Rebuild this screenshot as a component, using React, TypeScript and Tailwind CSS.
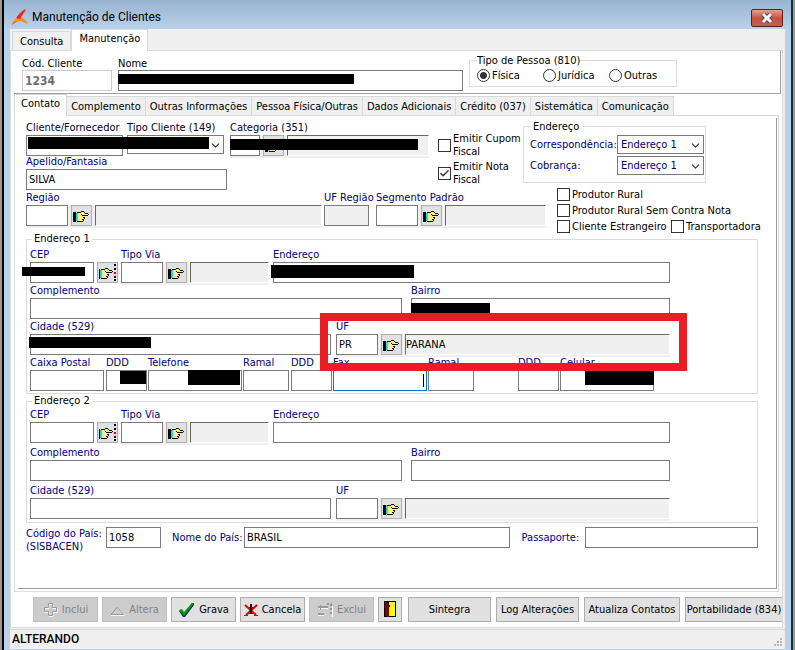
import { useId, type ReactNode } from 'react'
import { Check, ChevronDown } from 'lucide-react'
import clsx from 'clsx'

const mainTabs = ['Consulta', 'Manutenção']
const detailTabs = ['Contato', 'Complemento', 'Outras Informações', 'Pessoa Física/Outras', 'Dados Adicionais', 'Crédito (037)', 'Sistemática', 'Comunicação']
const personTypes = ['Física', 'Jurídica', 'Outras']

const box = 'block h-[21px] w-full min-w-0 border px-0.5 text-black outline-none'
const plain = 'border-[#7a7a7a] bg-white'

function HandIcon({ dots = false }: { dots?: boolean }) {
  return (
    <svg width="17" height="17" viewBox="0 0 17 17" shapeRendering="crispEdges" aria-hidden="true">
      <g transform={dots ? 'translate(-2 0)' : undefined}>
        <path d={dots ? 'M2 5h1v10H2z' : 'M0 5h3v10H0z'} fill="#000" />
        <path d="M3 6h2v8H3z" fill="#00e5ee" />
        <path d="M5 6h3V5h3v1h1v1h3v2h-4v1h1v1h-1v2h-1v1H5z" fill="#fff27a" />
        <path d="M4 5h4v1H4zM8 4h3v1H8zM11 5h1v1h-1zM12 6h3v1h-3zM15 7h1v1h-1zM9 8h6v1H9zM8 7h1v1H8zM10 10h2v1h-2zM11 11h1v1h-1zM9 12h2v1H9zM10 13h1v1h-1zM4 14h6v1H4z" fill="#111" />
      </g>
      {dots && <path d="M15 0h2v2h-2zM15 4h2v2h-2zM15 12h2v2h-2zM15 15h2v2h-2z" fill="#000" />}
      {dots && <path d="M15 8h2v2h-2z" fill="#e00000" />}
    </svg>
  )
}

// Black strip over private data
function Mask({ className }: { className: string }) {
  return <span className={clsx('absolute bg-black', className)} />
}

function Field({ label, className, dark, focus, value, readOnly, children }: { label: string; className: string; dark?: boolean; focus?: boolean; value?: string; readOnly?: boolean; children?: ReactNode }) {
  const id = useId()
  const look = focus ? 'border-[#0078d7] bg-white' : readOnly ? 'border-[#7a7a7a] bg-[#f0f0f0]' : plain
  return (
    <div className={clsx('relative min-w-0', className)}>
      <label htmlFor={id} className={clsx('block h-[15px] leading-[15px] whitespace-nowrap', dark ? 'text-[#000033]' : 'text-[#000080]')}>{label}</label>
      <input id={id} defaultValue={value} readOnly={readOnly} className={clsx(box, look)} />
      {children}
    </div>
  )
}

function LookupButton({ label, dots }: { label: string; dots?: boolean }) {
  return (
    <button type="button" aria-label={label} className="flex h-[21px] w-[21px] shrink-0 items-center justify-center border border-[#adadad] bg-[#e1e1e1]">
      <HandIcon dots={dots} />
    </button>
  )
}

// Code box + search hand + description of the code
function Lookup({ label, code, text, codeWidth = 'w-[42px]', className, dark }: { label: string; code?: string; text?: string; codeWidth?: string; className: string; dark?: boolean }) {
  const id = useId()
  return (
    <div className={clsx('min-w-0', className)}>
      <label htmlFor={id} className={clsx('block h-[15px] leading-[15px] whitespace-nowrap', dark ? 'text-[#000033]' : 'text-[#000080]')}>{label}</label>
      <div className="flex gap-[3px] bg-[#f0f0f0] shadow-[0_2px_0_#f0f0f0]">
        <div className={clsx('shrink-0', codeWidth)}><input id={id} defaultValue={code} className={clsx(box, plain)} /></div>
        <LookupButton label={'Procurar ' + label} />
        <input readOnly aria-label={label + ' descrição'} defaultValue={text} className="h-[21px] w-0 min-w-0 flex-1 border border-t-[#696969] border-r-white border-b-white border-l-[#696969] bg-[#f0f0f0] text-black outline-none" />
      </div>
    </div>
  )
}

function Select({ id, options, className }: { id: string; options: string[]; className: string }) {
  return (
    <div className={clsx('relative', className)}>
      <select id={id} className="block h-[19px] w-full appearance-none border border-[#7a7a7a] bg-white pl-[3px] text-[#000080] outline-none">
        {options.map((o) => <option key={o}>{o}</option>)}
      </select>
      <ChevronDown size={13} strokeWidth={2} className="pointer-events-none absolute top-1 right-0.5 text-[#333333]" />
    </div>
  )
}

function Tick({ label, checked, className }: { label: string; checked?: boolean; className?: string }) {
  return (
    <label className={clsx('flex items-center gap-0.5 leading-[13px] text-black', className)}>
      <span className="relative h-[13px] w-[13px] shrink-0">
        <input type="checkbox" defaultChecked={checked} className="peer block h-[13px] w-[13px] appearance-none border border-[#333333] bg-white" />
        <Check size={11} strokeWidth={3} className="pointer-events-none absolute top-px left-px hidden text-[#333333] peer-checked:block" />
      </span>
      <span>{label}</span>
    </label>
  )
}

function Tabs({ items, active, wide }: { items: string[]; active: string; wide?: boolean }) {
  return (
    <div role="tablist" className={clsx('flex h-[21px] items-end', wide && 'pl-0.5')}>
      {items.map((t) => (
        <button
          key={t}
          type="button"
          role="tab"
          aria-selected={t === active}
          className={clsx(
            'border border-b-0 border-[#d9d9d9] whitespace-nowrap text-black',
            t === active ? 'relative -mb-px h-[22px] bg-white pb-1' : 'h-[19px] border-l-0 bg-[#f0f0f0] first:border-l',
            wide ? 'px-[7px]' : t === active ? 'px-[6px]' : 'px-1',
          )}
        >
          {t}
        </button>
      ))}
    </div>
  )
}

function ToolButton({ label, icon, disabled, className }: { label?: string; icon?: ReactNode; disabled?: boolean; className: string }) {
  return (
    <button
      type="button"
      disabled={disabled}
      aria-label={label ?? 'Sair'}
      className={clsx(
        'flex h-[25px] shrink-0 items-center justify-center gap-1 border whitespace-nowrap',
        disabled ? 'border-[#bfbfbf] bg-[#cccccc] text-[#838383]' : 'border-[#adadad] bg-[#e1e1e1] text-black',
        className,
      )}
    >
      {icon}
      {label}
    </button>
  )
}

const plusIcon = (
  <svg width="15" height="15" viewBox="0 0 15 15" fill="none">
    <path d="M6 2.5h4v4h4v4h-4v4H6v-4H2v-4h4z" stroke="#fff" />
    <path d="M5.500 1.500h4v4h4v4h-4v4h-4v-4h-4v-4h4z" stroke="#999" />
  </svg>
)
const triangleIcon = (
  <svg width="15" height="12" viewBox="0 0 15 12" fill="none">
    <path d="M1 11.500h13.500L8 3" stroke="#fff" />
    <path d="M1 10.500L7.500 3l6 7.500z" stroke="#999" />
  </svg>
)
const okIcon = (
  <svg width="17" height="16" viewBox="0 0 17 16">
    <path d="M1 9l3-1 2 3L14 1h2v2L7 15H5z" fill="#0a2a5a" />
    <path d="M1 8l3-1 2 3L14 1h2L6 14z" fill="#00a000" />
  </svg>
)
const cancelIcon = (
  <svg width="14" height="14" viewBox="0 0 14 14">
    <path d="M5 4h4l-1 3 1 4H5l1-4z" fill="#111" />
    <path d="M6 1h2v3H6z" fill="#111" />
    <path d="M1 2l11 10M13 2L2 12" stroke="#e80000" strokeWidth="2" />
    <path d="M0 12.500h4M10 12.500h4" stroke="#e80000" />
    <path d="M6 5h2v4H6z" fill="#111" />
  </svg>
)
// Dashed corner with an arrow pointing left
const deleteIcon = (
  <svg width="16" height="14" viewBox="0 0 16 14" fill="none" shapeRendering="crispEdges">
    <path d="M2 5.500h9M1 12.500h6M15.500 3v11" stroke="#fff" />
    <path d="M1 4h10M1 11h6" stroke="#999" strokeWidth="2" />
    <path d="M3 2v5" stroke="#999" />
    <path d="M10 1h5M14 1v12" stroke="#999" strokeWidth="2" strokeDasharray="2 2" />
  </svg>
)
const doorIcon = (
  <svg width="12" height="17" viewBox="0 0 12 17" shapeRendering="crispEdges">
    <path d="M0 0h12v16H0z" fill="#000" />
    <path d="M5 1h6v14H5z" fill="#ffff00" />
    <path d="M1 1h1l3 2v13H4l-3-1z" fill="#800000" />
    <path d="M5 4h1v2H5z" fill="#000" />
  </svg>
)

function Address({ title, className, children }: { title: string; className: string; children: ReactNode }) {
  return (
    <fieldset className={clsx('min-w-0 border border-[#dcdcdc] pl-[3px]', className)}>
      <legend className="ml-0.5 px-0.5 leading-[12px] text-black">{title}</legend>
      {children}
    </fieldset>
  )
}

// CEP / Tipo Via / Endereço line
function StreetRow({ masked }: { masked?: boolean }) {
  return (
    <div className="flex items-end pr-[87px]">
      <Field label="CEP" className="w-16 shrink-0">{masked && <Mask className="top-5 -left-2 h-[9px] w-[63px]" />}</Field>
      <div className="px-[3px]"><LookupButton label="Procurar CEP" dots /></div>
      <Lookup label="Tipo Via" className="mr-1 w-[148px] shrink-0" />
      <Field label="Endereço" className="flex-1">{masked && <Mask className="top-[18px] -left-0.5 h-[13px] w-[143px]" />}</Field>
    </div>
  )
}

export default function App() {
  return (
    <div className="flex min-h-screen bg-[#9a9a9a] pr-0.5 pl-0.5 font-['DejaVu_Sans_Condensed','DejaVu_Sans',sans-serif] text-[11px] leading-[13px]">
      <div className="flex min-w-0 flex-1 flex-col border-x-2 border-l-black border-r-[#12323d] bg-[#b9d1ea] pb-px">
        <header className="flex h-[29px] items-center gap-1 bg-linear-to-b from-[#99b4d1] to-[#b9d1ea] pt-1.5 pr-2 pl-[7px]">
          <svg width="17" height="17" viewBox="0 0 17 17" aria-hidden="true">
            <path d="M14 0l1 1-5 7-2 3-7 5 3-5 4-3 1-3z" fill="#f23a1d" />
            <path d="M7 9l3-2 6 6 1 2-7-3-6 1-4 3 3-5z" fill="#ff8a1f" />
            <path d="M14 0L8 5 5 9l4 1z" fill="#e8261c" />
          </svg>
          <h1 className="flex-1 font-[Roboto,'Open_Sans',sans-serif] text-[12px] text-black">Manutenção de Clientes</h1>
          <button type="button" aria-label="Fechar" className="flex h-[18px] w-8 items-center justify-center rounded-[2px] border border-[#5c1f1b] bg-linear-to-b from-[#e3a091] via-[#c9503d] to-[#c75f4b]">
            <svg width="12" height="10" viewBox="0 0 12 10"><path d="M2 1l8 8M10 1L2 9" stroke="#4a4a5a" strokeWidth="5" /><path d="M2 1l8 8M10 1L2 9" stroke="#fff" strokeWidth="3" /></svg>
          </button>
        </header>

        <main className="mr-1.5 ml-1.5 flex flex-1 flex-col bg-[#f0f0f0]">
          <Tabs items={mainTabs} active="Manutenção" wide />
          <div className="mr-0.5 flex flex-1 flex-col overflow-hidden border border-[#dcdcdc] bg-white pl-[3px]">
            <div className="mr-px flex h-[43px] items-start border-r border-b border-[#a0a0a0] pt-1.5 pl-2">
              <div className="w-[90px] shrink-0">
                <label htmlFor="codigo" className="block h-[13px] text-black">Cód. Cliente</label>
                <input id="codigo" defaultValue="1234" readOnly className="block h-[21px] w-full border border-[#cccccc] px-0.5 text-[12px] font-bold text-[#6d6d6d] outline-none" />
              </div>
              <div className="relative ml-[6px] min-w-0 flex-1">
                <label htmlFor="nome" className="block h-[13px] text-black">Nome</label>
                <input id="nome" className={clsx(box, plain)} />
                <Mask className="top-[17px] left-0 h-2.5 w-[236px]" />
              </div>
              <fieldset className="-mt-[3px] mr-[103px] ml-[6px] h-[33px] w-[208px] shrink-0 border border-[#dcdcdc] pl-[7px]">
                <legend className="text-black">Tipo de Pessoa (810)</legend>
                <div className="flex pt-0.5">
                  {personTypes.map((p, i) => (
                    <label key={p} className="flex w-[66px] items-center gap-0.5 text-black">
                      <input type="radio" name="pessoa" defaultChecked={i === 0} className="h-[13px] w-[13px] appearance-none rounded-full border border-[#333333] bg-white checked:bg-[radial-gradient(circle,#333_3px,#fff_4px)]" />
                      {p}
                    </label>
                  ))}
                </div>
              </fieldset>
            </div>

            <Tabs items={detailTabs} active="Contato" />
            <div className="mr-[3px] flex flex-1 flex-col border border-[#dcdcdc] pr-px pb-0.5 pl-[3px]">
              <div className="mt-0.5 flex-1 border-r border-b border-[#a0a0a0] pt-0.5 pr-[18px] pl-2">
                <div className="flex items-start">
                  <div className="w-[403px] shrink-0">
                    <div className="relative flex">
                      <Field label="Cliente/Fornecedor" dark className="w-[97px]" />
                      <div className="ml-1 w-[97px]">
                        <label htmlFor="tipo-cliente" className="block h-[15px] leading-[15px] whitespace-nowrap text-[#000033]">Tipo Cliente (149)</label>
                        <Select id="tipo-cliente" options={['']} className="w-full" />
                      </div>
                      <Lookup label="Categoria (351)" dark codeWidth="w-[30px]" className="ml-[6px] flex-1" />
                      <Mask className="top-[17px] left-0.5 h-3 w-[181px]" />
                      <Mask className="top-[19px] left-[204px] h-[11px] w-[188px]" />
                    </div>
                    <div className="-mt-0.5"><Field label="Apelido/Fantasia" value="SILVA" className="w-[201px]" /></div>
                  </div>
                  <div className="ml-[9px] flex w-[85px] shrink-0 flex-col gap-0.5 pt-3">
                    <Tick label="Emitir Cupom Fiscal" />
                    <Tick label="Emitir Nota Fiscal" checked />
                  </div>
                  <fieldset className="h-[63px] w-[183px] shrink-0 border border-[#dcdcdc] pr-px pl-[6px]">
                    <legend className="px-[3px] text-black">Endereço</legend>
                    <div className="flex flex-col gap-0.5 pt-0.5 text-[#000080]">
                      <div className="flex items-center justify-between"><label htmlFor="corresp">Correspondência:</label><Select id="corresp" options={['Endereço 1', 'Endereço 2']} className="w-[87px] shrink-0" /></div>
                      <div className="flex items-center justify-between"><label htmlFor="cobranca">Cobrança:</label><Select id="cobranca" options={['Endereço 1', 'Endereço 2']} className="w-[87px] shrink-0" /></div>
                    </div>
                  </fieldset>
                </div>

                <div className="flex h-[43px] items-start">
                  <Lookup label="Região" className="flex-1" />
                  <Field label="UF Região" readOnly className="ml-0.5 w-[45px] shrink-0" />
                  <Lookup label="Segmento Padrão" className="ml-[7px] w-[170px] shrink-0" />
                  <div className="-mt-0.5 ml-[11px] flex w-[201px] shrink-0 flex-col gap-[3px] whitespace-nowrap">
                    <Tick label="Produtor Rural" />
                    <Tick label="Produtor Rural Sem Contra Nota" />
                    <div className="flex"><Tick label="Cliente Estrangeiro" className="w-[114px] shrink-0" /><Tick label="Transportadora" /></div>
                  </div>
                </div>

                <Address title="Endereço 1" className="pt-0.5 pb-0.5">
                  <StreetRow masked />
                  <div className="flex gap-[9px] pr-[87px]">
                    <Field label="Complemento" className="flex-[372]" />
                    <Field label="Bairro" className="flex-[259]"><Mask className="top-5 left-0 h-2.5 w-[79px]" /></Field>
                  </div>
                  <div className="flex gap-[5px] pr-[87px]">
                    <Field label="Cidade (529)" className="w-[301px] shrink-0"><Mask className="top-[18px] -left-px h-[11px] w-[122px]" /></Field>
                    <div className="relative min-w-0 flex-1">
                      <Lookup label="UF" code="PR" text="PARANA" className="w-full" />
                      <div className="pointer-events-none absolute -top-1.5 -right-[17px] -bottom-4 -left-4 z-10 border-8 border-[#ed1c24]" />
                    </div>
                  </div>
                  <div className="flex pr-[103px]">
                    <Field label="Caixa Postal" className="w-[74px]" />
                    <Field label="DDD" className="ml-0.5 w-[41px]"><Mask className="top-4 right-px h-[13px] w-[26px]" /></Field>
                    <Field label="Telefone" className="ml-px w-[94px]"><Mask className="top-[15px] right-0.5 h-[15px] w-[52px]" /></Field>
                    <Field label="Ramal" className="ml-px w-[46px]" />
                    <Field label="DDD" className="ml-0.5 w-[41px]" />
                    <Field label="Fax" focus className="ml-px w-[94px]"><Mask className="right-[3px] bottom-1 h-[13px] w-px" /></Field>
                    <Field label="Ramal" className="ml-px w-[46px]" />
                    <Field label="DDD" className="ml-11 w-[41px]" />
                    <Field label="Celular" className="ml-px w-[94px]"><Mask className="top-[15px] right-0 h-[15px] w-[69px]" /></Field>
                  </div>
                </Address>

                <Address title="Endereço 2" className="mt-px pb-[3px]">
                  <div className="flex flex-col gap-0.5">
                    <StreetRow />
                    <div className="flex gap-[9px] pr-[87px]">
                      <Field label="Complemento" className="flex-[372]" />
                      <Field label="Bairro" className="flex-[259]" />
                    </div>
                    <div className="flex gap-[5px] pr-[87px]">
                      <Field label="Cidade (529)" className="w-[301px] shrink-0" />
                      <Lookup label="UF" className="flex-1" />
                    </div>
                  </div>
                </Address>

                <div className="mt-1 flex items-start text-[#000080]">
                  <label htmlFor="pais" className="w-20 shrink-0 whitespace-nowrap">Código do País:<br />(SISBACEN)</label>
                  <div className="w-[55px] shrink-0"><input id="pais" defaultValue="1058" className={clsx(box, plain)} /></div>
                  <label htmlFor="nome-pais" className="ml-[11px] w-[72px] shrink-0 leading-[21px] whitespace-nowrap">Nome do País:</label>
                  <div className="flex-[265]"><input id="nome-pais" defaultValue="BRASIL" className={clsx(box, plain)} /></div>
                  <label htmlFor="passaporte" className="ml-3 w-[63px] shrink-0 leading-[21px] whitespace-nowrap">Passaporte:</label>
                  <div className="flex-[173]"><input id="passaporte" className={clsx(box, plain)} /></div>
                </div>
              </div>
            </div>

            <div className="flex gap-[6px] pt-[5px] pb-[5px] pl-[19px]">
              <div className="flex shrink-0 gap-1">
                <ToolButton label="Inclui" icon={plusIcon} disabled className="w-[65px]" />
                <ToolButton label="Altera" icon={triangleIcon} disabled className="w-[65px]" />
                <ToolButton label="Grava" icon={okIcon} className="w-[65px]" />
                <ToolButton label="Cancela" icon={cancelIcon} className="w-[65px]" />
                <ToolButton label="Exclui" icon={deleteIcon} disabled className="w-[65px]" />
                <ToolButton icon={doorIcon} className="w-6" />
              </div>
              <div className="flex shrink-0 gap-[5px]">
                <ToolButton label="Sintegra" className="w-[83px]" />
                <ToolButton label="Log Alterações" className="w-[83px]" />
                <ToolButton label="Atualiza Contatos" className="w-24" />
                <ToolButton label="Portabilidade (834)" className="w-[98px]" />
              </div>
            </div>
          </div>

          <footer className="mt-px flex h-5 items-end justify-between border-t border-[#d7d7d7] pr-0.5 pl-0.5">
            <span className="self-center font-[Roboto,'Open_Sans',sans-serif] text-[12px] font-medium text-black">ALTERANDO</span>
            <svg width="9" height="9" viewBox="0 0 9 9" className="mb-0.5" fill="#b8b8b8"><path d="M6 0h2v2H6zM3 3h2v2H3zM6 3h2v2H6zM0 6h2v2H0zM3 6h2v2H3zM6 6h2v2H6z" /></svg>
          </footer>
        </main>
      </div>
    </div>
  )
}
